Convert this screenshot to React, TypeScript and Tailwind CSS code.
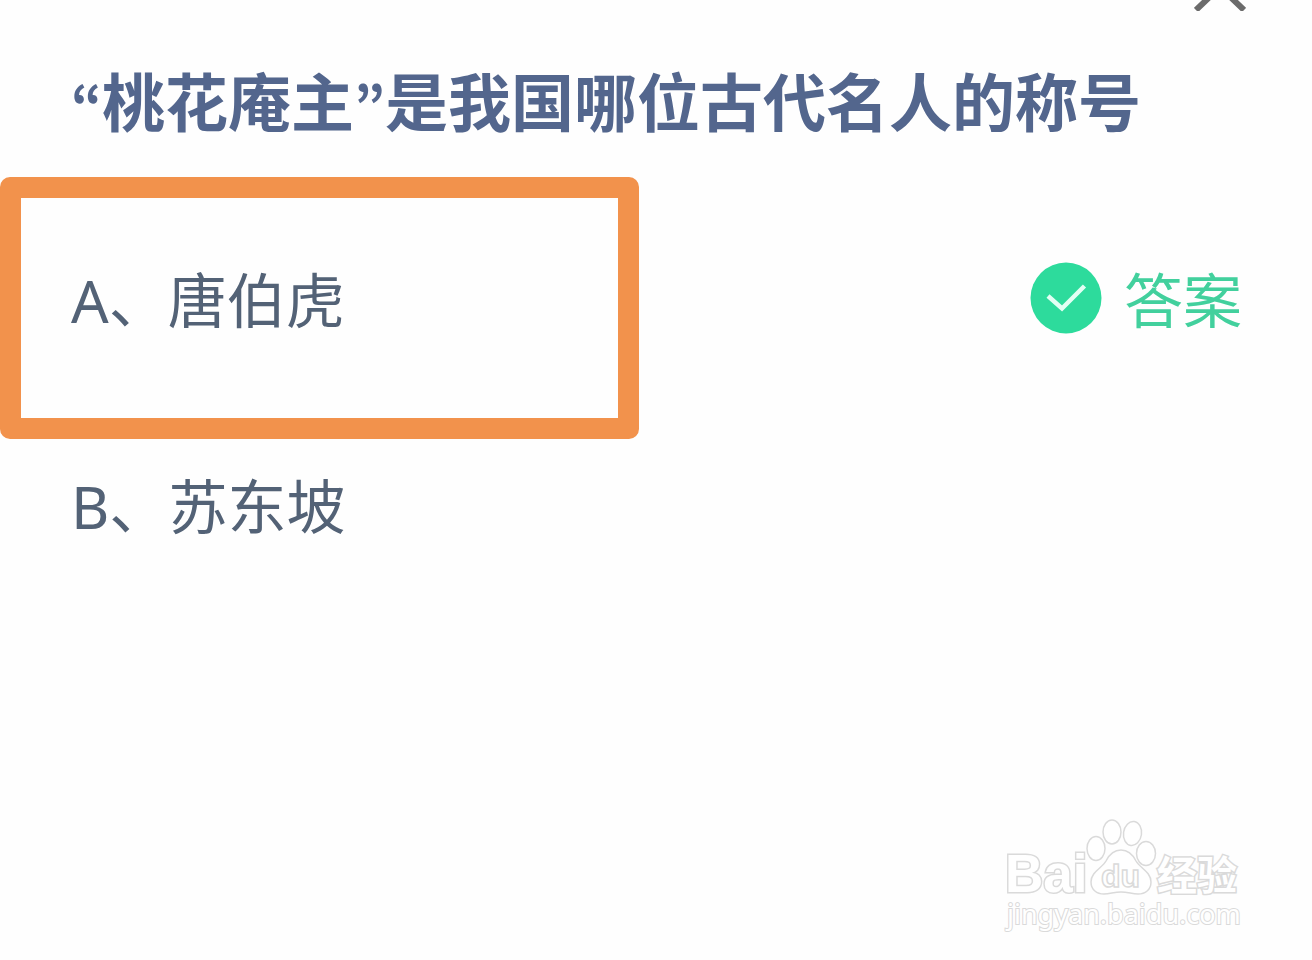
import { type FC } from "react";

type Option = {
  label: string;
  text: string;
  correct: boolean;
};

const options: Option[] = [
  { label: "A", text: "唐伯虎", correct: true },
  { label: "B", text: "苏东坡", correct: false },
];

const CloseIcon: FC = () => (
  <svg viewBox="0 0 52 11" className="block h-[11px] w-[52px]" aria-hidden="true">
    <path d="M2 10 26 -13 50 10" fill="none" stroke="#6b6b6b" strokeWidth="6" />
  </svg>
);

const CheckIcon: FC = () => (
  <svg viewBox="0 0 72 72" className="h-[72px] w-[72px]" aria-hidden="true">
    <circle cx="36" cy="36" r="35.500" fill="#2ddb9c" />
    <path
      d="M18 34 32 46.500 54.500 24"
      fill="none"
      stroke="#e2fff4"
      strokeWidth="4.500"
    />
  </svg>
);

const Watermark: FC = () => (
  <svg
    viewBox="0 0 240 116"
    className="h-[116px] w-[240px]"
    role="img"
    aria-label="Baidu 经验"
    fill="#ffffff"
    stroke="#dadada"
    strokeWidth="1.500"
    fontFamily="'Liberation Sans', 'Noto Sans CJK SC', sans-serif"
  >
    <g fontWeight="bold" paintOrder="stroke" strokeWidth="3">
      <text x="3" y="76" fontSize="53">
        Bai
      </text>
      <text x="155" y="74" fontSize="40">
        经验
      </text>
    </g>
    <ellipse cx="94" cy="32.500" rx="9" ry="12" />
    <ellipse cx="110" cy="16" rx="9" ry="12" />
    <ellipse cx="130.500" cy="17.500" rx="9" ry="12" transform="rotate(8 130.500 17.500)" />
    <ellipse cx="144" cy="37.500" rx="9.500" ry="12" />
    <path d="M119 34c-8 0-12 5-15 11-4 7-15 11-15 21 0 8 6 12 13 12 6 0 10-2 17-2s11 2 17 2c7 0 13-4 13-12 0-10-11-14-15-21-3-6-7-11-15-11Z" />
    <text x="99" y="71" fontSize="32" fontWeight="bold" strokeWidth="1.500">
      du
    </text>
    <text
      x="5"
      y="108"
      fontSize="27"
      fontFamily="'Noto Sans', sans-serif"
      paintOrder="stroke"
      strokeWidth="2"
    >
      jingyan.baidu.com
    </text>
  </svg>
);

const OptionRow: FC<{ option: Option }> = ({ option }) => (
  <li className="flex items-center justify-between pr-[70px]">
    <div
      className={`w-[639px] pl-[50px] text-[59px] leading-[88px] text-[#536276] ${
        option.correct
          ? "rounded-[10px] border-[21px] border-[#f2924c] pt-[58px] pb-[74px]"
          : "border-x-[21px] border-transparent"
      }`}
    >
      {option.label}、{option.text}
    </div>
    {option.correct && (
      <div className="flex items-center gap-[22px] pb-5 text-[#42d09d]">
        <CheckIcon />
        <span className="pt-1 text-[59px] leading-[88px]">答案</span>
      </div>
    )}
  </li>
);

export default function App() {
  return (
    <main className="flex min-h-screen flex-col overflow-hidden bg-[#fefefe] font-['Noto_Sans','Noto_Sans_CJK_SC',sans-serif]">
      <header className="flex justify-end pr-[66px]">
        <button type="button" aria-label="关闭">
          <CloseIcon />
        </button>
      </header>
      <h1 className="mt-[45px] px-[71px] text-[63px] leading-[92px] font-bold text-[#53668d]">
        {/* the Korean face has the narrow curly quotes */}
        <span className="font-['Noto_Sans_CJK_KR',sans-serif] text-[54px] leading-none">“</span>
        桃花庵主
        <span className="font-['Noto_Sans_CJK_KR',sans-serif] text-[54px] leading-none">”</span>
        是我国哪位古代名人的称号
      </h1>
      <ul className="mt-[29px] flex flex-col gap-[23px]">
        {options.map((option) => (
          <OptionRow key={option.label} option={option} />
        ))}
      </ul>
      <footer className="mt-auto flex justify-end pr-[70px] pb-7">
        <Watermark />
      </footer>
    </main>
  );
}
